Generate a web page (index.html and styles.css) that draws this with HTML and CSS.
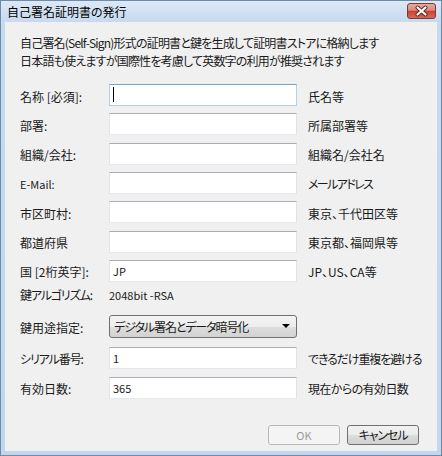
FILE: index.html
```html
<!DOCTYPE html>
<html lang="ja">

<head>
    <meta charset="UTF-8">
    <meta name="viewport" content="width=device-width, initial-scale=1.0">
    <link rel="stylesheet" href="styles.css">
    <title>自己署名証明書の発行</title>
</head>

<body>
    <div class="window">
        <div class="titlebar">
            <span class="title">自己署名証明書の発行</span>
            <span class="close">
                <svg width="29" height="16" viewBox="0 0 29 16">
                    <path d="M10.5 4.5 L18.5 11.5 M18.5 4.5 L10.5 11.5" stroke="#5b2019" stroke-width="4" stroke-linecap="round" fill="none"/>
                    <path d="M10.5 4.5 L18.5 11.5 M18.5 4.5 L10.5 11.5" stroke="#ffffff" stroke-width="2.2" stroke-linecap="round" fill="none"/>
                </svg>
            </span>
        </div>
        <div class="client">
            <p class="intro">自己署名(Self-Sign)形式の証明書と鍵を生成して証明書ストアに格納します<br>日本語も使えますが国際性を考慮して英数字の利用が推奨されます</p>

            <div class="row first">
                <span class="label">名称 [必須]:</span>
                <div class="input focus"><span class="caret"></span></div>
                <span class="hint">氏名等</span>
            </div>
            <div class="row">
                <span class="label">部署:</span>
                <div class="input"></div>
                <span class="hint">所属部署等</span>
            </div>
            <div class="row">
                <span class="label">組織/会社:</span>
                <div class="input"></div>
                <span class="hint">組織名/会社名</span>
            </div>
            <div class="row">
                <span class="label small">E-Mail:</span>
                <div class="input"></div>
                <span class="hint tighter">メールアドレス</span>
            </div>
            <div class="row">
                <span class="label">市区町村:</span>
                <div class="input"></div>
                <span class="hint">東京、千代田区等</span>
            </div>
            <div class="row">
                <span class="label">都道府県</span>
                <div class="input"></div>
                <span class="hint">東京都、福岡県等</span>
            </div>
            <div class="row">
                <span class="label">国 [2桁英字]:</span>
                <div class="input">JP</div>
                <span class="hint">JP、US、CA等</span>
            </div>
            <div class="row algo">
                <span class="label tight">鍵アルゴリズム:</span>
                <span class="value">2048bit -RSA</span>
            </div>
            <div class="row usage">
                <span class="label">鍵用途指定:</span>
                <div class="combo">
                    <span class="tight">デジタル署名とデータ暗号化</span>
                    <span class="arrow"></span>
                </div>
            </div>
            <div class="row serial">
                <span class="label tight">シリアル番号:</span>
                <div class="input">1</div>
                <span class="hint tight">できるだけ重複を避ける</span>
            </div>
            <div class="row days">
                <span class="label">有効日数:</span>
                <div class="input">365</div>
                <span class="hint loose">現在からの有効日数</span>
            </div>

            <div class="buttons">
                <span class="btn disabled">OK</span>
                <span class="btn tight">キャンセル</span>
            </div>
        </div>
    </div>
</body>

</html>
```

FILE: styles.css
```css
* {
    margin: 0;
    padding: 0;
    box-sizing: border-box;
}

body {
    font-family: "Noto Sans CJK JP", sans-serif;
    font-size: 12px;
    font-feature-settings: "palt" 1;
    color: #1a1a1a;
    white-space: nowrap;
}

/* kana in the original font run narrower than in Noto */
.tight {
    letter-spacing: -1.1px;
}

.tighter {
    letter-spacing: -1.6px;
}

.loose {
    letter-spacing: -0.6px;
}

.window {
    width: 442px;
    height: 456px;
    border: 1px solid #6c8cab;
    background: linear-gradient(#dce8f5, #c7d9ee 22px, #c3d6eb);
    padding: 0 4px 4px;
    display: flex;
    flex-direction: column;
}

.titlebar {
    height: 21px;
    display: flex;
    justify-content: space-between;
    padding-left: 2px;
}

.title {
    font-size: 12px;
    line-height: 22px;
    color: #000;
}

.close {
    width: 29px;
    height: 16px;
    margin-top: 2px;
    margin-right: 1px;
    border: 1px solid #7a3a32;
    border-radius: 3px;
    background: linear-gradient(#e7aa9f, #d88a7e 45%, #c8402f 50%, #d66a5c);
    display: flex;
}

.close svg {
    margin: -1px;
}

.client {
    flex: 1;
    background: #f0f0f0;
    padding: 12px 18px 0 15px;
}

.intro {
    line-height: 18px;
    letter-spacing: -0.8px;
}

.row {
    display: flex;
    align-items: center;
    height: 22px;
    margin-top: 7.33px;
}

.row.first {
    margin-top: 14px;
}

.row.algo {
    margin-top: 1px;
}

.row.usage {
    margin-top: 10px;
    height: 23px;
}

.row.serial {
    margin-top: 9px;
}

.row.days {
    margin-top: 8px;
}

.label {
    width: 89px;
    flex: none;
    padding-top: 2px;
}

.label.small {
    font-size: 11px;
}

.value {
    font-size: 11px;
    padding-top: 2px;
}

.input {
    width: 188px;
    height: 22px;
    flex: none;
    background: #fff;
    border: 1px solid #e2e3ea;
    border-top-color: #abadb3;
    border-bottom-color: #e3e9ef;
    font-size: 11px;
    line-height: 20px;
    padding-left: 3px;
    position: relative;
}

.input.focus {
    border-color: #b5cfe6;
    border-top-color: #7da2c4;
}

.caret {
    position: absolute;
    left: 3px;
    top: 2px;
    width: 1px;
    height: 15px;
    background: #000;
}

.hint {
    margin-left: 11px;
    padding-top: 2px;
}

.combo {
    width: 188px;
    height: 23px;
    border: 1px solid #707070;
    border-radius: 3px;
    background: linear-gradient(#f4f4f4, #ececec 50%, #dedede 51%, #d2d2d2);
    display: flex;
    align-items: center;
    justify-content: space-between;
    padding: 0 6px 0 4px;
}

.arrow {
    width: 0;
    height: 0;
    border-left: 4px solid transparent;
    border-right: 4px solid transparent;
    border-top: 4px solid #000;
}

.buttons {
    display: flex;
    justify-content: flex-end;
    gap: 7px;
    margin-top: 26px;
}

.btn {
    width: 72px;
    height: 20px;
    border: 1px solid #707070;
    border-radius: 3px;
    background: linear-gradient(#f2f2f2, #ebebeb 50%, #dddddd 51%, #cfcfcf);
    display: flex;
    align-items: center;
    justify-content: center;
}

.btn.disabled {
    border-color: #b4b8bb;
    background: #f4f4f4;
    color: #9a9a9a;
    font-size: 11px;
}
```
